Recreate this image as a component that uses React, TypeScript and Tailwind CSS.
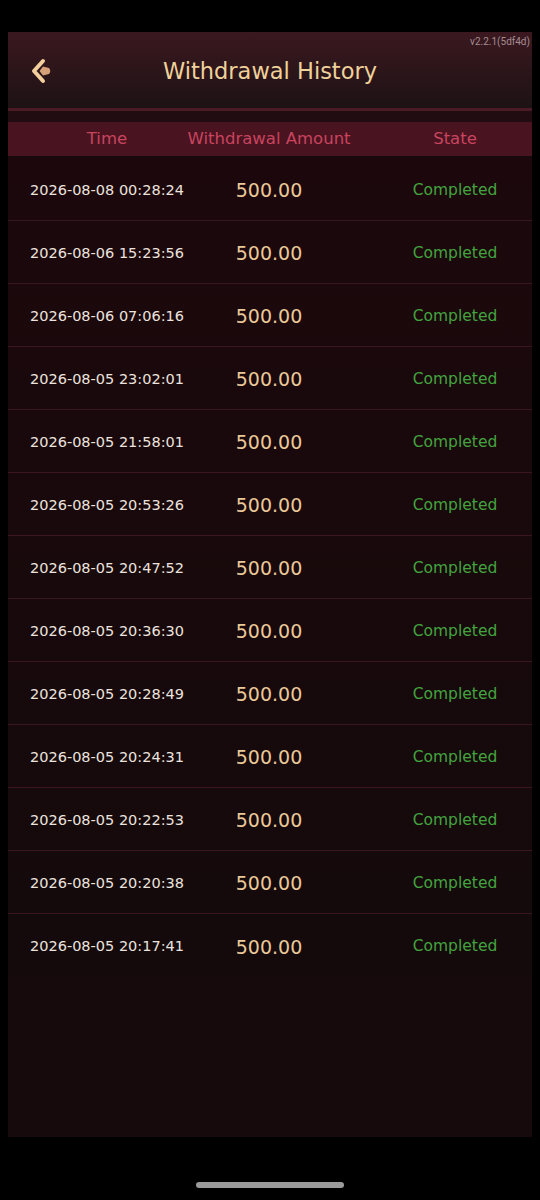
import React from "react";

const rows = [
  "2026-08-08 00:28:24",
  "2026-08-06 15:23:56",
  "2026-08-06 07:06:16",
  "2026-08-05 23:02:01",
  "2026-08-05 21:58:01",
  "2026-08-05 20:53:26",
  "2026-08-05 20:47:52",
  "2026-08-05 20:36:30",
  "2026-08-05 20:28:49",
  "2026-08-05 20:24:31",
  "2026-08-05 20:22:53",
  "2026-08-05 20:20:38",
  "2026-08-05 20:17:41",
];

function BackIcon() {
  return (
    <svg width="26" height="28" viewBox="0 0 26 28" fill="none">
      <path
        d="M14 4 L5 14 L14 24"
        stroke="#f2cf9c"
        strokeWidth="4"
        strokeLinecap="round"
        strokeLinejoin="round"
      />
      <path d="M14 9.5 L20 11 Q22.5 14 20 17 L14 18.5 L10.5 14 Z" fill="#d59f78" />
    </svg>
  );
}

export default function App() {
  return (
    <div
      className="w-[540px] h-[1200px] bg-black flex flex-col"
      style={{ fontFamily: "'DejaVu Sans', Lato, sans-serif" }}
    >
      <div className="h-[32px]" />
      <div className="mx-[8px] h-[1105px] flex flex-col bg-[#160a0c]">
        {/* Header */}
        <div className="relative h-[76px] bg-gradient-to-b from-[#3b1820] to-[#1d1214] flex items-center justify-center">
          <span
            className="absolute top-[2px] right-[2px] text-[10px] text-[#a58d92]"
            style={{ fontFamily: "Roboto, sans-serif" }}
          >
            v2.2.1(5df4d)
          </span>
          <div className="absolute left-[21px] top-[25px]">
            <BackIcon />
          </div>
          <span className="text-[22.5px] text-[#efd19b] mt-[3px]">
            Withdrawal History
          </span>
        </div>
        <div className="h-[3px] bg-[#4b1a25]" />
        <div className="h-[11px] bg-[#200c11]" />

        {/* Table head */}
        <div className="h-[34px] bg-[#4a1320] flex items-center text-[16.5px] text-[#c8445f]">
          <div className="w-[198px] flex justify-center">Time</div>
          <div className="w-[126px] flex justify-center whitespace-nowrap">
            Withdrawal Amount
          </div>
          <div className="flex-1 pl-[46px] flex justify-center">State</div>
        </div>
        <div className="h-[2px]" />

        {/* Rows */}
        <div className="flex flex-col bg-gradient-to-b from-[#1c080c] to-[#140a0b]">
          {rows.map((t, i) => (
            <div
              key={t}
              className={`h-[63px] flex items-center pt-[3px] ${
                i < rows.length - 1 ? "border-b border-[#3a1620]" : ""
              }`}
            >
              <div className="w-[198px] flex justify-center whitespace-nowrap text-[14.5px] text-[#ece3de]">
                {t}
              </div>
              <div className="w-[126px] flex justify-center text-[19px] text-[#ebc898]">
                500.00
              </div>
              <div className="flex-1 pl-[46px] flex justify-center text-[15.5px] text-[#43a33f]">
                Completed
              </div>
            </div>
          ))}
        </div>
        <div className="flex-1" />
      </div>
      <div className="flex-1 flex items-start justify-center pt-[45px]">
        <div className="w-[148px] h-[6px] rounded-full bg-[#9a9a9a]" />
      </div>
    </div>
  );
}
